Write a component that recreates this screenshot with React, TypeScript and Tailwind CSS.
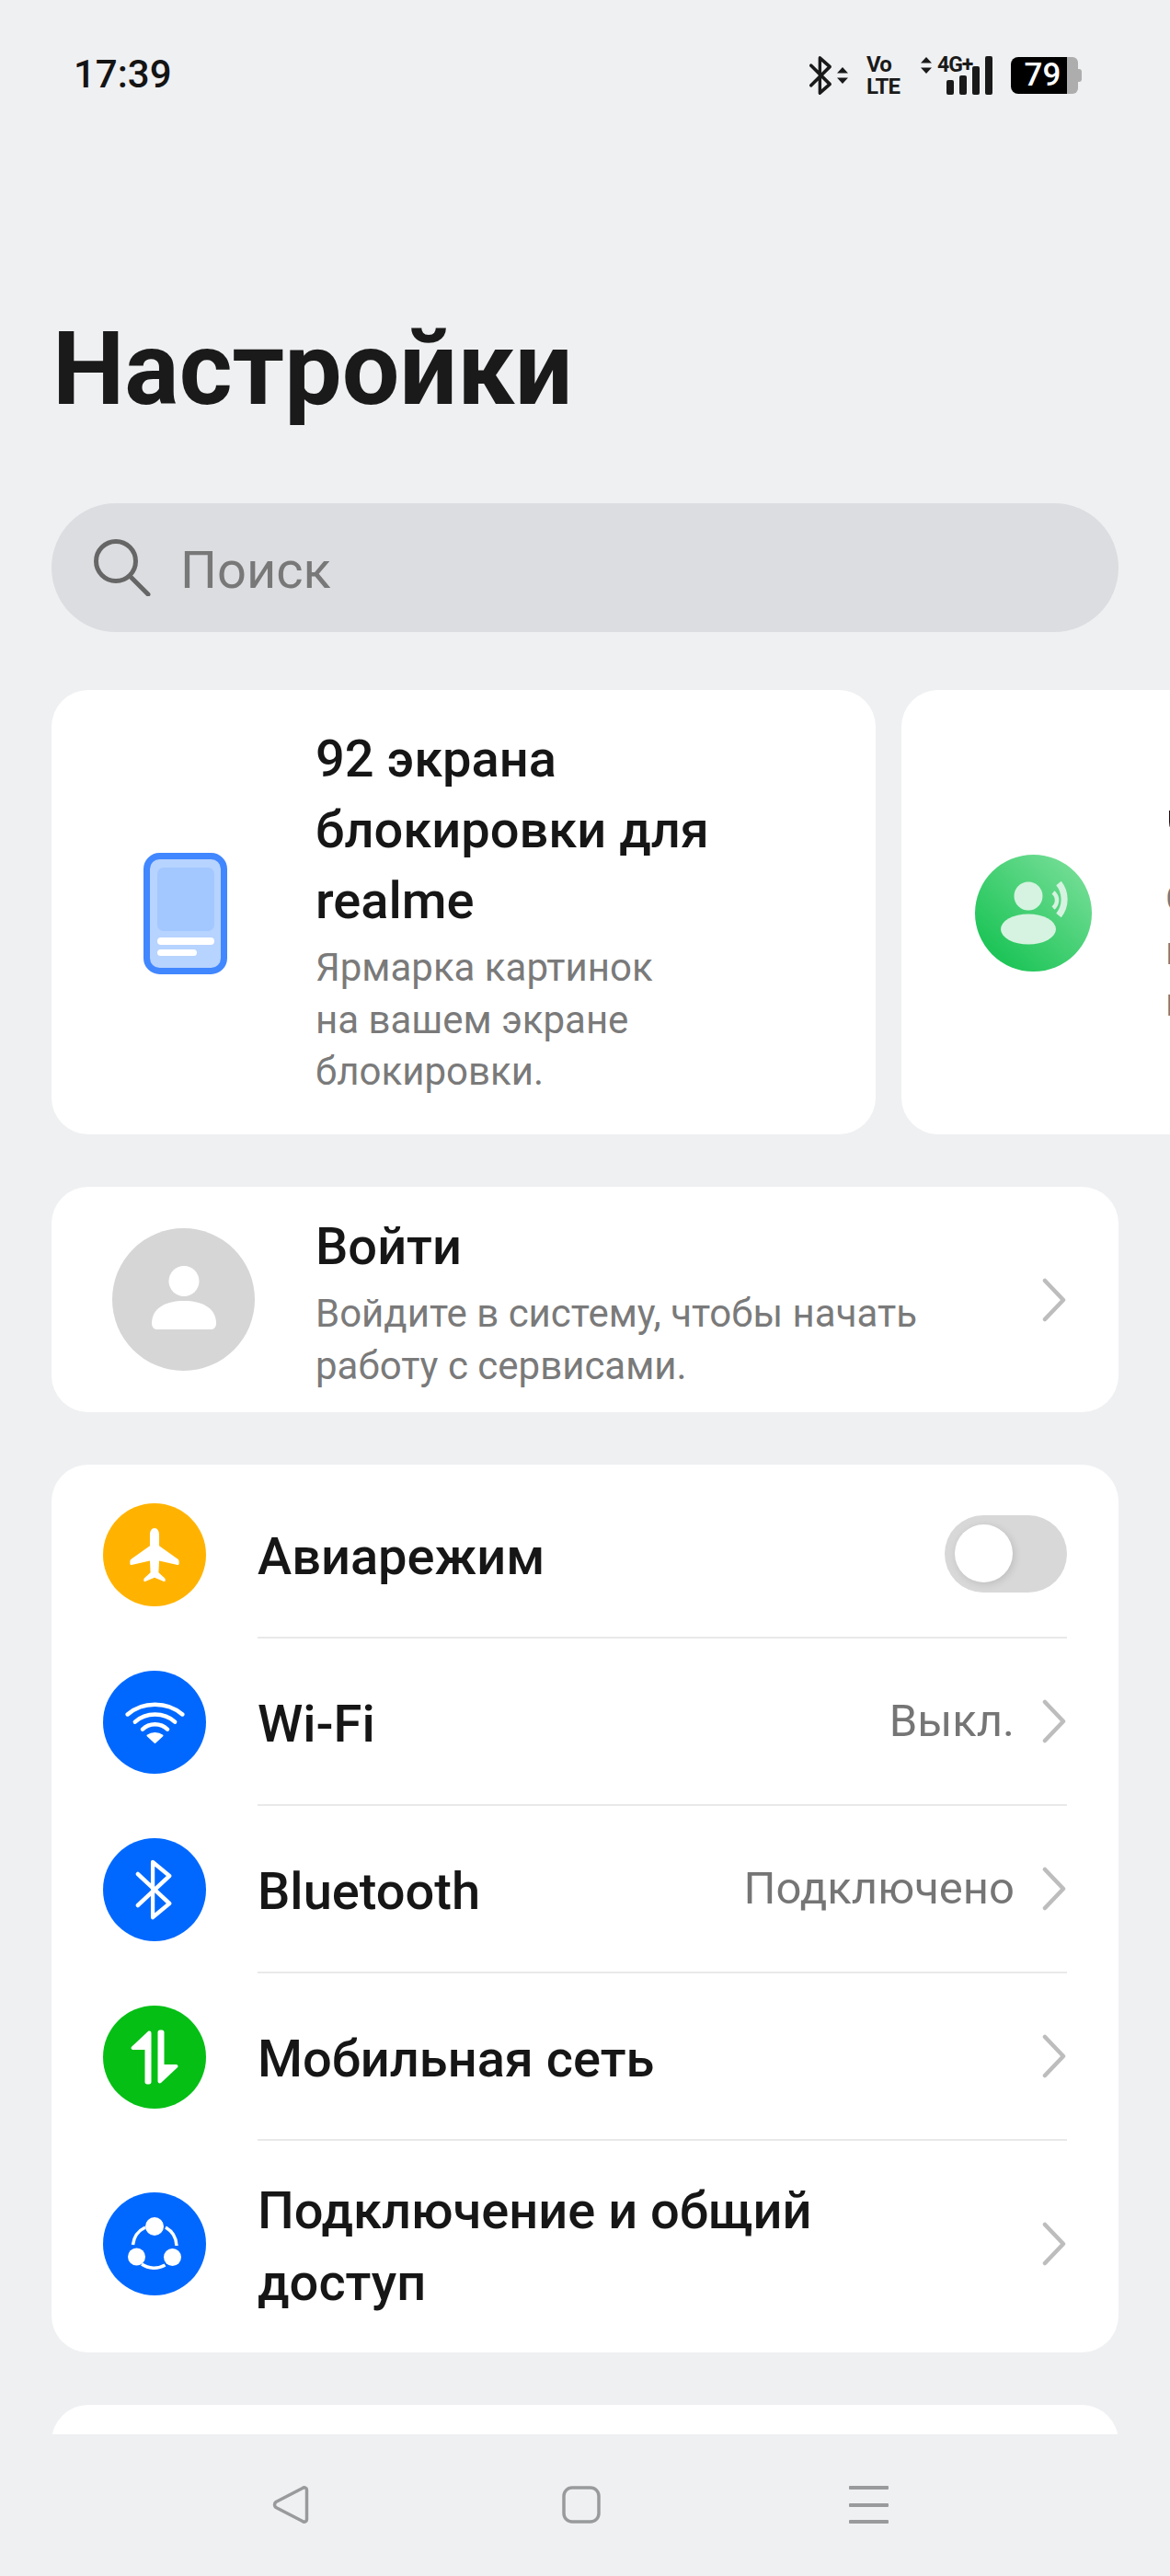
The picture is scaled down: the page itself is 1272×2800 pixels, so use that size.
import React from "react";

const Chevron = () => (
  <svg width="28" height="48" viewBox="0 0 28 48" className="shrink-0">
    <path d="M4 3 L24 24 L4 45" fill="none" stroke="#bdbdbd" strokeWidth="4.5" strokeLinecap="round" strokeLinejoin="round" />
  </svg>
);

const Plane = () => (
  <svg width="54" height="60" viewBox="0 0 60 64" preserveAspectRatio="none">
    <path d="M30 1c3.600 0 5.600 3.600 5.600 8v12.500l22.300 15.300c1.100.8 1.700 1.900 1.700 3.200v2.300c0 1-.9 1.700-1.900 1.500L35.600 39l-.7 13.600 7.200 6.200c.6.500.9 1.200.9 2v1c0 .9-.9 1.500-1.700 1.200L30 58.300l-11.300 4.700c-.8.300-1.700-.3-1.700-1.200v-1c0-.8.300-1.500.9-2l7.200-6.200-.7-13.600-22.100 4.800c-1 .2-1.900-.5-1.900-1.500V40c0-1.300.6-2.400 1.700-3.200l22.300-15.300V9c0-4.400 2-8 5.600-8z" fill="#fff" />
  </svg>
);

const Wifi = () => (
  <svg width="65" height="47" viewBox="0 0 72 52" fill="none" stroke="#fff" strokeWidth="5" strokeLinecap="round">
    <path d="M3 16C21 0 51 0 69 16" />
    <path d="M12 25C25 13 47 13 60 25" />
    <path d="M21 34C29 26 43 26 51 34" />
    <path d="M27 41.500C32 37.500 40 37.500 45 41.500L36 50z" fill="#fff" strokeWidth="2" strokeLinejoin="round" />
  </svg>
);

const BluetoothGlyph = ({ stroke = "#fff", w = 42, h = 66, sw = 4.5 }: { stroke?: string; w?: number; h?: number; sw?: number }) => (
  <svg width={w} height={h} viewBox="0 0 44 66" fill="none" stroke={stroke} strokeWidth={sw} strokeLinecap="round" strokeLinejoin="round" preserveAspectRatio="none">
    <path d="M3 16 L39 48 L20 63 V3 L39 18 L3 50" />
  </svg>
);

const Arrows = () => (
  <svg width="52" height="60" viewBox="0 0 52 60" fill="#fff">
    <path d="M19 2c1.600-1 3.500-.2 3.500 2v53c0 1.400-1 2.500-2.500 2.500h-2c-1.400 0-2.500-1.100-2.500-2.500V22H2.500c-1.800 0-2.600-2-1.400-3.300z" />
    <path d="M29.500 3c0-1.400 1.100-2.500 2.500-2.500h2c1.400 0 2.500 1.100 2.500 2.500v35h13c1.800 0 2.600 2 1.400 3.300L33 58c-1.600 1-3.500.2-3.500-2z" />
  </svg>
);

const Share = () => (
  <svg width="58" height="58" viewBox="0 0 58 58" fill="none">
    <path d="M5.500 30A24 24 0 0 1 19 11" stroke="#fff" strokeWidth="3.500" />
    <path d="M41 11A24 24 0 0 1 53 31" stroke="#fff" strokeWidth="3.500" />
    <path d="M15 51A24 24 0 0 0 40.500 52" stroke="#fff" strokeWidth="3.500" />
    <circle cx="29" cy="10" r="10" fill="#fff" />
    <circle cx="9.500" cy="43" r="9.500" fill="#fff" />
    <circle cx="48.500" cy="43.500" r="9.500" fill="#fff" />
  </svg>
);

const SectionRow = ({
  bg,
  icon,
  label,
  value,
  right,
  last,
}: {
  bg: string;
  icon: React.ReactNode;
  label: React.ReactNode;
  value?: string;
  right?: React.ReactNode;
  last?: boolean;
}) => (
  <div className={`flex items-center ${last ? "h-[224px]" : "h-[182px]"}`}>
    <div className={`ml-[56px] flex h-[112px] w-[112px] shrink-0 items-center justify-center rounded-full ${bg}`}>{icon}</div>
    <div className={`ml-[56px] mr-[56px] flex h-full flex-1 items-center justify-between ${last ? "" : "border-b-2 border-[#e9e9e9]"}`}>
      <div className="pt-[5px] text-[56px] leading-[78px] font-medium text-[#161616]">{label}</div>
      {right ?? (
        <div className="flex items-center gap-[29px]">
          {value && <span className="text-[49px] text-[#757575]">{value}</span>}
          <Chevron />
        </div>
      )}
    </div>
  </div>
);

export default function App() {
  return (
    <div className="flex h-[2800px] w-[1272px] flex-col overflow-hidden bg-[#eff0f2] font-['Roboto',sans-serif]">
      <main className="min-h-0 flex-1 overflow-hidden">
        <header className="flex h-[160px] items-start justify-between pt-[58px] pr-[96px] pl-[80px]">
          <div className="text-[42px] leading-[46px] font-medium text-[#141414]">17:39</div>
          <div className="flex items-center">
            <BluetoothGlyph stroke="#1a1a1a" w={25} h={42} sw={6} />
            <svg width="12" height="18" viewBox="0 0 12 18" className="ml-[5px]" fill="#1a1a1a">
              <path d="M6 0l6 6.500H0zM6 18l6-6.500H0z" />
            </svg>
            <div className="ml-[20px] flex h-[48px] w-[38px] flex-col text-[24px] leading-[24px] font-bold tracking-[-0.8px] text-[#1a1a1a]">
              <span>Vo</span>
              <span>LTE</span>
            </div>
            <svg width="12" height="18" viewBox="0 0 12 18" className="mb-[22px] ml-[21px]" fill="#1a1a1a">
              <path d="M6 0l6 6.500H0zM6 18l6-6.500H0z" />
            </svg>
            <div className="relative ml-[6px] flex h-[42px] w-[60px] items-end justify-end gap-[6px]">
              <span className="absolute top-[-2px] left-0 text-[23px] leading-[24px] font-bold tracking-[-1px] text-[#1a1a1a]">4G+</span>
              <i className="h-[16px] w-[8px] rounded-[2px] bg-[#1a1a1a]" />
              <i className="h-[21px] w-[8px] rounded-[2px] bg-[#1a1a1a]" />
              <i className="h-[31px] w-[8px] rounded-[2px] bg-[#1a1a1a]" />
              <i className="h-[42px] w-[8px] rounded-[2px] bg-[#1a1a1a]" />
            </div>
            <div className="ml-[20px] flex items-center">
              <div className="flex h-[40px] w-[61px] items-center justify-center rounded-l-[8px] bg-black pl-[8px] text-[35px] font-medium text-white">79</div>
              <div className="h-[40px] w-[12px] rounded-r-[6px] bg-[#adadad]" />
              <div className="h-[14px] w-[4px] rounded-r-[3px] bg-[#adadad]" />
            </div>
          </div>
        </header>

        <div className="h-[387px] pt-[166px] pl-[57px]">
          <h1 className="text-[111px] leading-[150px] font-bold text-[#1a1a1a]">Настройки</h1>
        </div>

        <div className="px-[56px]">
          <div className="flex h-[140px] items-center rounded-full bg-[#dcdde0] pl-[46px]">
            <svg width="62" height="62" viewBox="0 0 62 62" fill="none" stroke="#666" strokeWidth="5" strokeLinecap="round">
              <circle cx="24" cy="24" r="21.500" />
              <path d="M40 41 L59 60" />
            </svg>
            <span className="ml-[32px] pt-[6px] text-[56px] text-[#787878]">Поиск</span>
          </div>

          <div className="mt-[63px] flex h-[483px] gap-[28px]">
            <section className="flex w-[896px] shrink-0 rounded-[40px] bg-white">
              <div className="flex w-[287px] shrink-0 items-center pt-[3px] pl-[100px]">
                <svg width="91" height="132" viewBox="0 0 91 132">
                  <rect x="3.500" y="3.500" width="84" height="125" rx="14" fill="#b7d3ff" stroke="#4187ff" strokeWidth="7" />
                  <rect x="15" y="16" width="62" height="69" rx="7" fill="#a3c7ff" />
                  <rect x="15" y="92" width="62" height="8" rx="4" fill="#fff" />
                  <rect x="15" y="105" width="43" height="7" rx="3.500" fill="#fff" />
                </svg>
              </div>
              <div className="pt-[37px]">
                <div className="text-[56px] leading-[77px] font-medium text-[#161616]">92 экрана<br />блокировки для<br />realme</div>
                <div className="mt-[6px] text-[42px] leading-[56.500px] text-[#7a7a7a]">Ярмарка картинок<br />на вашем экране<br />блокировки.</div>
              </div>
            </section>
            <section className="flex w-[896px] shrink-0 rounded-[40px] bg-white">
              <div className="flex w-[287px] shrink-0 items-center pt-[2px] pl-[80px]">
                <svg width="127" height="127" viewBox="0 0 127 127">
                  <defs>
                    <linearGradient id="g" x1="0.2" y1="0.85" x2="0.85" y2="0.15">
                      <stop offset="0" stopColor="#1fc559" />
                      <stop offset="1" stopColor="#6fdc92" />
                    </linearGradient>
                  </defs>
                  <circle cx="63.500" cy="63.500" r="63.500" fill="url(#g)" />
                  <circle cx="58" cy="45" r="15.500" fill="#d5f3e0" />
                  <ellipse cx="58" cy="81" rx="30" ry="16.500" fill="#d5f3e0" />
                  <path d="M85 41a11 11 0 0 1 0 17" stroke="#d5f3e0" strokeWidth="4.500" fill="none" />
                  <path d="M91 31a28 28 0 0 1 0 35" stroke="#d5f3e0" strokeWidth="7" fill="none" />
                </svg>
              </div>
              <div className="pt-[114px]">
                <div className="text-[56px] leading-[76px] font-medium text-[#161616]">Чистый звук</div>
                <div className="mt-[9px] text-[42px] leading-[56.500px] text-[#7a7a7a]">Сделайте голос<br />нормальным для<br />понимания</div>
              </div>
            </section>
          </div>

          <section className="mt-[57px] flex h-[245px] items-center rounded-[40px] bg-white pr-[56px] pl-[66px]">
            <div className="flex h-[155px] w-[155px] shrink-0 items-center justify-center rounded-full bg-[#d6d6d6]">
              <svg width="70" height="70" viewBox="0 0 72 72" fill="#fff" className="mb-[3px]">
                <circle cx="36" cy="17" r="17" />
                <path d="M0 64c0-17 16-25 36-25s36 8 36 25c0 4-2 7-6 7H6c-4 0-6-3-6-7z" />
              </svg>
            </div>
            <div className="ml-[66px] flex-1 pt-[6px]">
              <div className="text-[56px] leading-[72px] font-medium text-[#161616]">Войти</div>
              <div className="mt-[8px] text-[42px] leading-[57px] text-[#7a7a7a]">Войдите в систему, чтобы начать<br />работу с сервисами.</div>
            </div>
            <Chevron />
          </section>

          <section className="mt-[57px] rounded-[40px] bg-white pt-[7px] pb-[6px]">
            <SectionRow bg="bg-[#ffb300]" icon={<Plane />} label="Авиарежим" right={
              <div className="relative h-[84px] w-[133px] rounded-full bg-[#d8d8d8]">
                <div className="absolute top-[10px] left-[11px] h-[63px] w-[63px] rounded-full bg-white shadow-[2px_2px_8px_rgba(0,0,0,0.12)]" />
              </div>
            } />
            <SectionRow bg="bg-[#0068ff]" icon={<Wifi />} label="Wi-Fi" value="Выкл." />
            <SectionRow bg="bg-[#0068ff]" icon={<BluetoothGlyph />} label="Bluetooth" value="Подключено" />
            <SectionRow bg="bg-[#05bf15]" icon={<Arrows />} label="Мобильная сеть" />
            <SectionRow bg="bg-[#0068ff]" icon={<Share />} label={<>Подключение и общий<br />доступ</>} last />
          </section>

          <section className="mt-[57px] h-[200px] rounded-[40px] bg-white" />
        </div>
      </main>

      <footer className="flex h-[154px] shrink-0 items-start bg-[#eff0f2] pt-[56px] pl-[296px]">
        <svg width="40" height="41" viewBox="0 0 40 41" fill="none" stroke="#989a9b" strokeWidth="3.500" strokeLinejoin="round">
          <path d="M33 2.500c2-1.400 4.500-.4 4.500 2v32c0 2.400-2.500 3.400-4.500 2L4 23.500c-2-1.400-2-4.600 0-6z" />
        </svg>
        <svg width="42" height="41" viewBox="0 0 42 41" fill="none" stroke="#989a9b" strokeWidth="3.500" className="ml-[275px]">
          <rect x="2" y="2" width="38" height="37" rx="9" />
        </svg>
        <div className="ml-[270px] flex h-[41px] w-[43px] flex-col justify-between">
          <i className="h-[4px] rounded-[1px] bg-[#989a9b]" />
          <i className="h-[4px] rounded-[1px] bg-[#989a9b]" />
          <i className="h-[4px] rounded-[1px] bg-[#989a9b]" />
        </div>
      </footer>
    </div>
  );
}
